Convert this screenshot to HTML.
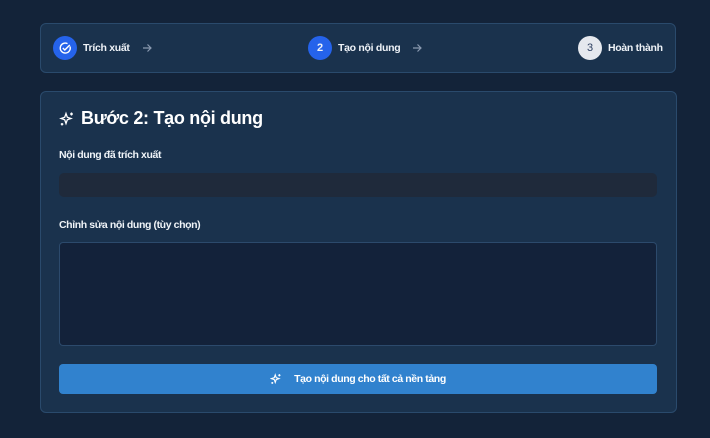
<!DOCTYPE html>
<html><head><style>
*{box-sizing:border-box;margin:0;padding:0}
body{width:710px;height:438px;background:#132339;font-family:"Liberation Sans",sans-serif;color:#fff;position:relative;overflow:hidden}
.card{position:absolute;background:#1a324d;border:1px solid #2a4a6c;border-radius:6px}
.step{position:absolute;top:36px;display:flex;align-items:center;font-size:10.5px;font-weight:bold;color:#eef2f7;letter-spacing:-0.3px}
.c{width:24px;height:24px;border-radius:50%;background:#2563eb;display:flex;align-items:center;justify-content:center;margin-right:6px;font-size:11px;letter-spacing:0}
.arr{margin-left:12px;display:inline-flex}
.lab{position:absolute;left:59px;font-size:10.5px;font-weight:bold;color:#f0f4f8;letter-spacing:-0.4px}
</style></head><body>
<div class="card" style="left:40px;top:23px;width:636px;height:50px"></div>
<div class="step" style="left:53px"><div class="c"><svg width="14" height="14" viewBox="0 0 14 14" fill="none" stroke="#fff" stroke-width="1.4"><path d="M12 5.5A5 5 0 1 1 9.5 2.6"/><path d="M4.8 7l2 2 5-5"/></svg></div>Trích xuất<span class="arr"><svg width="10" height="10" viewBox="0 0 10 10" fill="none" stroke="#8a9ab0" stroke-width="1.2"><path d="M1 5h8M5.5 1.5L9 5 5.5 8.5"/></svg></span></div>
<div class="step" style="left:308px"><div class="c">2</div>Tạo nội dung<span class="arr"><svg width="10" height="10" viewBox="0 0 10 10" fill="none" stroke="#8a9ab0" stroke-width="1.2"><path d="M1 5h8M5.5 1.5L9 5 5.5 8.5"/></svg></span></div>
<div class="step" style="left:578px"><div class="c" style="background:#e5e8ee;color:#2c3e60;font-weight:normal">3</div>Hoàn thành</div>
<div class="card" style="left:40px;top:91px;width:637px;height:322px"></div>
<div style="position:absolute;left:59px;top:108px;font-size:18px;font-weight:bold;display:flex;align-items:center;letter-spacing:-0.3px"><svg width="16" height="16" viewBox="0 0 16 16" fill="none" stroke="#fff" stroke-width="1.3" style="margin-right:6px"><path d="M7 2.5l1.3 3.7 3.7 1.3-3.7 1.3L7 12.5 5.7 8.8 2 7.5l3.7-1.3z"/><path d="M12.5 1.5v3M11 3h3M3 12v2.5M1.8 13.2h2.5"/></svg>Bước 2: Tạo nội dung</div>
<div class="lab" style="top:149px">Nội dung đã trích xuất</div>
<div style="position:absolute;left:59px;top:173px;width:598px;height:24px;background:#1f2a3b;border-radius:5px"></div>
<div class="lab" style="top:219px">Chỉnh sửa nội dung (tùy chọn)</div>
<div style="position:absolute;left:59px;top:242px;width:598px;height:104px;background:#13223a;border:1px solid #2c4a6c;border-radius:4px"></div>
<div style="position:absolute;left:59px;top:364px;width:598px;height:30px;background:#3182ce;border-radius:4px;display:flex;align-items:center;justify-content:center;font-size:10.5px;font-weight:bold;letter-spacing:-0.4px"><svg width="12" height="12" viewBox="0 0 16 16" fill="none" stroke="#fff" stroke-width="1.5" style="margin-right:12px"><path d="M7 2.5l1.3 3.7 3.7 1.3-3.7 1.3L7 12.5 5.7 8.8 2 7.5l3.7-1.3z"/><path d="M12.5 1.5v3M11 3h3M3 12v2.5M1.8 13.2h2.5"/></svg>Tạo nội dung cho tất cả nền tảng</div>
</body></html>
